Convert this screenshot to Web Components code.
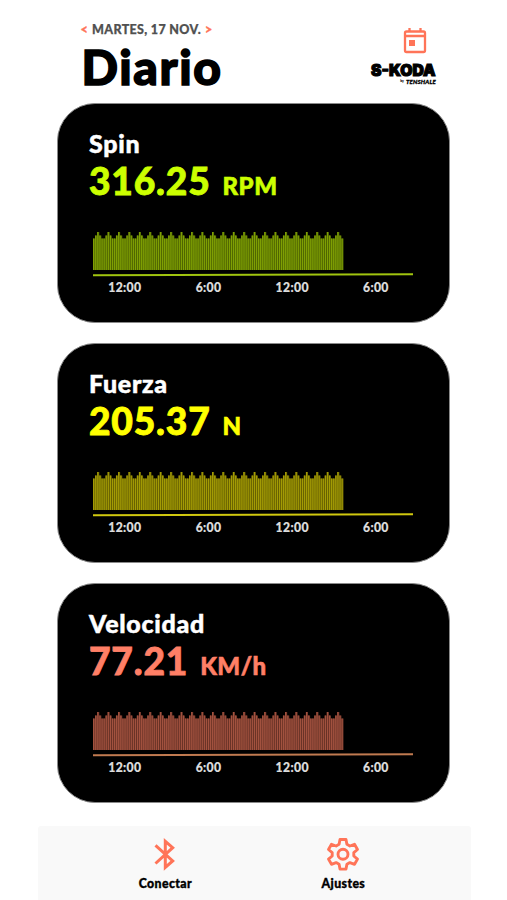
<!DOCTYPE html>
<html lang="es">
<head>
<meta charset="utf-8">
<title>Diario</title>
<style>
  html, body { margin: 0; height: 100%; background: #fff; }
  body { font-family: Lato, 'Open Sans', sans-serif; font-weight: 900; overflow: hidden; }
</style>
</head>
<body>
<diary-app>
  <diary-header slot="header" date="MARTES, 17 NOV." heading="Diario"></diary-header>
  <metric-card label="Spin" value="316.25" unit="RPM" style="--accent:#ccff00;--bar:#7f9f04;--gap:#506800;--axis:#a0c40f"></metric-card>
  <metric-card label="Fuerza" value="205.37" unit="N" style="--accent:#ffff00;--bar:#a39b05;--gap:#686200;--axis:#d0c80f"></metric-card>
  <metric-card label="Velocidad" value="77.21" unit="KM/h" style="--accent:#ff7f66;--bar:#a2523f;--gap:#6c3428;--axis:#c07a50"></metric-card>
  <nav-bar slot="footer">
    <nav-item label="Conectar">
      <svg width="32" height="34" viewBox="0 0 32 34" fill="none" stroke="#ff7458" stroke-width="3">
        <path d="M6.500 8.300 L23.700 24 L16.300 30.500 V4.300 L23.700 10.700 L6.500 26.500"/>
      </svg>
    </nav-item>
    <nav-item label="Ajustes">
      <svg width="34" height="34" viewBox="0 0 34 34" fill="none" stroke="#ff7458" stroke-width="2.9" stroke-linejoin="round">
        <path d="M14 2.500h6l.9 4.800 3 1.700 4.600-1.700 3 5.200-3.700 3.100v3.400l3.700 3.100-3 5.200-4.600-1.700-3 1.700-.9 4.800h-6l-.9-4.800-3-1.700-4.600 1.700-3-5.200 3.700-3.100v-3.400l-3.700-3.100 3-5.200 4.600 1.700 3-1.700z"/>
        <circle cx="17" cy="17.300" r="5"/>
      </svg>
    </nav-item>
  </nav-bar>
</diary-app>

<script>
class DiaryApp extends HTMLElement {
  constructor() {
    super();
    this.attachShadow({ mode: 'open' }).innerHTML = `
      <style>
        :host { display: flex; flex-direction: column; height: 900px; width: 507px; }
        main { display: flex; flex-direction: column; gap: 20px; padding: 0 57px; flex: 1; }
      </style>
      <slot name="header"></slot>
      <main><slot></slot></main>
      <slot name="footer"></slot>
    `;
  }
}

class DiaryHeader extends HTMLElement {
  connectedCallback() {
    this.attachShadow({ mode: 'open' }).innerHTML = `
      <style>
        :host { display: flex; justify-content: space-between; height: 103px; padding: 0 71px 0 80.5px; box-sizing: border-box; }
        .date { display: flex; gap: 4px; margin-top: 22px; font-size: 12.5px; line-height: 16px; letter-spacing: .33px;
                color: #505050; white-space: nowrap; -webkit-text-stroke: .25px; }
        .date i { font-style: normal; color: #ff7458; -webkit-text-stroke: .4px; }
        h1 { margin: 0 0 0 1px; font-size: 48px; line-height: 57px; font-weight: 900; letter-spacing: 1.6px; color: #000; -webkit-text-stroke: 1.5px; }
        .side { display: flex; flex-direction: column; align-items: flex-end; margin-top: 27px; }
        .side svg { display: block; }
        .cal { margin-right: 9px; }
        .brand { margin-top: 5px; width: 66px; text-align: right; white-space: nowrap; color: #000; }
        .name { height: 20px; }
        .name svg { overflow: visible; }
        .by { display: flex; justify-content: flex-end; align-items: flex-start; gap: 2px; height: 6px; line-height: 6px; }
        .by small { font-size: 3.500px; line-height: 4px; }
        .by em { font-size: 6px; letter-spacing: .2px; -webkit-text-stroke: .3px; }
      </style>
      <div>
        <div class="date"><i>&lt;</i><span>${this.getAttribute('date')}</span><i>&gt;</i></div>
        <h1>${this.getAttribute('heading')}</h1>
      </div>
      <div class="side">
        <svg class="cal" width="24" height="27" viewBox="0 0 24 27" fill="none" stroke="#ff7458" stroke-width="2.3">
          <rect x="2" y="4.500" width="20" height="20.500" rx="1.500"/>
          <path d="M2 9h20M6.500 1v3.500M17.500 1v3.500"/>
          <rect x="6" y="13" width="6" height="6" fill="#ff7458" stroke="none"/>
        </svg>
        <div class="brand">
          <div class="name">
            <svg width="66" height="20" viewBox="0 0 66 20">
              <text x="1" y="16.500" font-family="Inter, sans-serif" font-weight="900" font-size="15.500" textLength="64.500" lengthAdjust="spacingAndGlyphs" stroke="#000" stroke-width="1.1">S-KODA</text>
            </svg>
          </div>
          <div class="by"><small>by</small><em>TENSHALE</em></div>
        </div>
      </div>
    `;
  }
}

class MetricCard extends HTMLElement {
  connectedCallback() {
    this.attachShadow({ mode: 'open' }).innerHTML = `
      <style>
        :host { display: flex; flex-direction: column; box-sizing: border-box; width: 393px; height: 220px;
                padding: 24px 31px 0; border: 1px solid #8a8a8a; border-radius: 38px; background: #000; }
        .label { font-size: 25px; line-height: 30px; letter-spacing: .7px; color: #fff; -webkit-text-stroke: .5px; }
        .reading { display: flex; align-items: baseline; gap: 12px; line-height: 46px; color: var(--accent); }
        .value { font-size: 37.2px; letter-spacing: .8px; -webkit-text-stroke: .8px; }
        .unit { font-size: 24px; letter-spacing: .5px; -webkit-text-stroke: .6px; }
      </style>
      <div class="label">${this.getAttribute('label')}</div>
      <div class="reading"><span class="value">${this.getAttribute('value')}</span><span class="unit">${this.getAttribute('unit')}</span></div>
      <bar-chart></bar-chart>
    `;
  }
}

class BarChart extends HTMLElement {
  // bar heights, one wave every 5 bars
  static WAVE = [31.5, 34.5, 38, 34.5, 31.5];

  connectedCallback() {
    const pitch = 250.5 / 120;
    let gaps = '';
    let bars = '';
    for (let i = 0; i < 120; i++) {
      const h = BarChart.WAVE[i % 5];
      const x = (i * pitch).toFixed(2);
      gaps += `<rect x="${x}" y="${38 - h}" width="${pitch}" height="${h}"/>`;
      bars += `<rect x="${x}" y="${38 - h}" width="1.3" height="${h}"/>`;
    }
    this.attachShadow({ mode: 'open' }).innerHTML = `
      <style>
        :host { display: block; margin: 23px 0 0 3.5px; width: 320px; }
        svg { display: block; }
        .gaps { fill: var(--gap); }
        .bars { fill: var(--bar); }
        .axis { stroke: var(--axis); stroke-width: 1.9; }
        .hours { display: grid; grid-template-columns: repeat(4, 83.7px); margin: 2px 0 0 -9.5px; }
        .hours span { text-align: center; font-size: 12.2px; line-height: 16px; letter-spacing: .35px; color: #ddd; -webkit-text-stroke: .2px; }
      </style>
      <svg width="320" height="46" viewBox="0 0 320 46">
        <g class="gaps">${gaps}</g>
        <g class="bars">${bars}</g>
        <path class="axis" d="M0 43.300L320 42.200"/>
      </svg>
      <div class="hours"><span>12:00</span><span>6:00</span><span>12:00</span><span>6:00</span></div>
    `;
  }
}

class NavBar extends HTMLElement {
  constructor() {
    super();
    this.attachShadow({ mode: 'open' }).innerHTML = `
      <style>
        :host { display: grid; grid-template-columns: 178px 178px; justify-content: start; box-sizing: border-box; width: 433px; height: 74px;
                margin-left: 38px; padding: 11px 0 0 38.4px; border-radius: 3px 3px 0 0; background: #f9f9f9; }
      </style>
      <slot></slot>
    `;
  }
}

class NavItem extends HTMLElement {
  connectedCallback() {
    this.attachShadow({ mode: 'open' }).innerHTML = `
      <style>
        :host { display: flex; flex-direction: column; align-items: center; }
        ::slotted(svg) { display: block; }
        span { margin-top: 4px; font-size: 12.3px; line-height: 17px; letter-spacing: .4px; color: #000; -webkit-text-stroke: .35px; }
      </style>
      <slot></slot>
      <span>${this.getAttribute('label')}</span>
    `;
  }
}

customElements.define('diary-app', DiaryApp);
customElements.define('diary-header', DiaryHeader);
customElements.define('bar-chart', BarChart);
customElements.define('metric-card', MetricCard);
customElements.define('nav-bar', NavBar);
customElements.define('nav-item', NavItem);
</script>
</body>
</html>
